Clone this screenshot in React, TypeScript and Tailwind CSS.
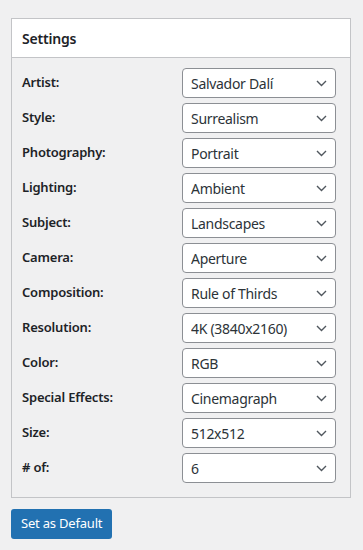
import { useState } from "react";

const fields: { label: string; value: string }[] = [
  { label: "Artist:", value: "Salvador Dalí" },
  { label: "Style:", value: "Surrealism" },
  { label: "Photography:", value: "Portrait" },
  { label: "Lighting:", value: "Ambient" },
  { label: "Subject:", value: "Landscapes" },
  { label: "Camera:", value: "Aperture" },
  { label: "Composition:", value: "Rule of Thirds" },
  { label: "Resolution:", value: "4K (3840x2160)" },
  { label: "Color:", value: "RGB" },
  { label: "Special Effects:", value: "Cinemagraph" },
  { label: "Size:", value: "512x512" },
  { label: "# of:", value: "6" },
];

function SelectBox({ value }: { value: string }) {
  const [val, setVal] = useState(value);
  return (
    <div className="relative w-[154px] h-[30px]">
      <select
        value={val}
        onChange={(e) => setVal(e.target.value)}
        className="appearance-none w-full h-full bg-white border border-[#8c8f94] rounded-[4px] pl-[8px] pr-[24px] text-[14px] tracking-[-0.3px] text-[#2c3338] outline-none"
      >
        <option>{value}</option>
      </select>
      <svg
        className="absolute right-[9px] top-[12px] pointer-events-none"
        width="11"
        height="7"
        viewBox="0 0 11 7"
        fill="none"
      >
        <path d="M1 1l4.5 4.5L10 1" stroke="#50575e" strokeWidth="1.4" />
      </svg>
    </div>
  );
}

export default function App() {
  return (
    <div
      className="min-h-[550px] bg-[#f0f0f1] pt-[18px] px-[11px] text-[#1d2327]"
      style={{ fontFamily: '"Noto Sans", "Open Sans", sans-serif' }}
    >
      <div className="w-[340px] border border-[#c3c4c7]">
        <div className="bg-white h-[39px] border-b border-[#c3c4c7] flex items-center px-[10px]">
          <h2 className="text-[14px] font-semibold tracking-[-0.2px]">Settings</h2>
        </div>
        <div className="flex flex-col gap-[5px] pt-[10px] pb-[14px] pl-[10px]">
          {fields.map((f) => (
            <div key={f.label} className="flex items-center">
              <label className="w-[160px] text-[13px] font-semibold tracking-[-0.2px]">{f.label}</label>
              <SelectBox value={f.value} />
            </div>
          ))}
        </div>
      </div>
      <button className="mt-[11px] h-[30px] px-[10px] rounded-[3px] bg-[#2271b1] text-white text-[13px] tracking-[-0.2px]">
        Set as Default
      </button>
    </div>
  );
}
